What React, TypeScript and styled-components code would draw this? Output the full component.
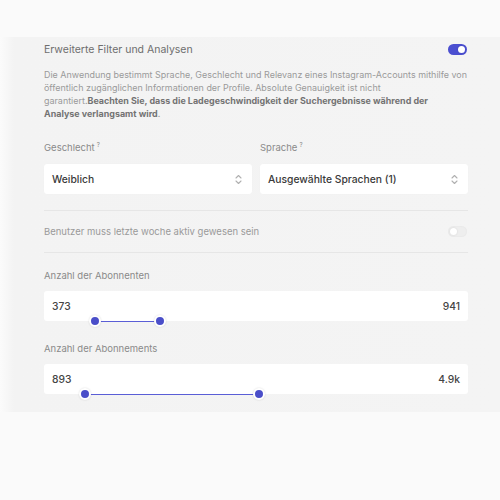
import React from 'react';
import styled, { createGlobalStyle } from 'styled-components';

const GlobalStyle = createGlobalStyle`
	html, body {
		margin: 0;
		padding: 0;
		background: #fafafa;
		font-family: Inter, 'Noto Sans', sans-serif;
	}
`;

const Page = styled.div`
	width: 500px;
	height: 500px;
	display: flex;
	flex-direction: column;
	background: #fafafa;
`;

const Spacer = styled.div<{ $h: number }>`
	height: ${({ $h }) => $h}px;
	flex-shrink: 0;
`;

const Panel = styled.div`
	display: flex;
	background: linear-gradient(to right, #fbfbfb 0px, #f3f3f3 14px, #f4f4f4 100%);
	height: 375px;
	box-sizing: border-box;
	padding: 5px 32px 0 44px;
`;

const Content = styled.div`
	width: 424px;
	display: flex;
	flex-direction: column;
`;

const HeaderRow = styled.div`
	display: flex;
	align-items: center;
	justify-content: space-between;
	height: 14px;
`;

const Title = styled.div`
	font-size: 10.5px;
	color: #6e6e6e;
`;

const Toggle = styled.div<{ $on?: boolean }>`
	width: 19px;
	height: 11px;
	border-radius: 6px;
	background: ${({ $on }) => ($on ? '#4b4fd0' : '#eeeeee')};
	position: relative;
	margin-right: 1px;
	box-shadow: ${({ $on }) => ($on ? 'none' : 'inset 0 0 2px rgba(0,0,0,0.06)')};

	&::after {
		content: '';
		position: absolute;
		top: 2px;
		left: ${({ $on }) => ($on ? '10px' : '2px')};
		width: 7px;
		height: 7px;
		border-radius: 50%;
		background: #fff;
		box-shadow: 0 0 2px rgba(0, 0, 0, 0.12);
	}
`;

const Description = styled.p`
	margin: 12px 0 0;
	font-size: 8.95px;
	line-height: 13px;
	color: #9a9a9a;
	white-space: nowrap;

	b {
		font-weight: 700;
		color: #737373;
	}
`;

const FieldGrid = styled.div`
	display: grid;
	grid-template-columns: 1fr 1fr;
	gap: 8px;
	margin-top: 22px;
`;

const Field = styled.div`
	display: flex;
	flex-direction: column;
`;

const Label = styled.div`
	font-size: 9.5px;
	color: #8a8a8a;
	height: 12px;
	display: flex;
	align-items: flex-start;

	sup {
		font-size: 6px;
		margin-left: 2px;
		line-height: 1;
	}
`;

const SelectBox = styled.div`
	margin-top: 10px;
	height: 30px;
	background: #fff;
	border-radius: 3px;
	display: flex;
	align-items: center;
	justify-content: space-between;
	padding: 0 10px 0 8px;
	font-size: 10.3px;
	font-weight: 500;
	color: #3a3a3a;
	box-shadow: 0 0 1px rgba(0, 0, 0, 0.04);
`;

const Divider = styled.div<{ $top: number }>`
	height: 1px;
	background: #e6e6e6;
	margin-top: ${({ $top }) => $top}px;
`;

const OptionRow = styled.div`
	display: flex;
	align-items: center;
	justify-content: space-between;
	height: 41px;
	font-size: 9.5px;
	color: #9a9a9a;
`;

const RangeField = styled.div<{ $top: number }>`
	margin-top: ${({ $top }) => $top}px;
	display: flex;
	flex-direction: column;
`;

const RangeBox = styled.div`
	margin-top: 9px;
	height: 30px;
	background: #fff;
	border-radius: 3px;
	display: flex;
	align-items: center;
	justify-content: space-between;
	padding: 0 8px;
	font-size: 10.3px;
	font-weight: 500;
	color: #444;
	position: relative;
`;

const Track = styled.div`
	position: absolute;
	height: 1.5px;
	background: #5a5ed6;
	bottom: -1px;
`;

const Thumb = styled.div`
	position: absolute;
	width: 8px;
	height: 8px;
	border-radius: 50%;
	background: #4a4ec9;
	border: 2px solid #fff;
	bottom: -6px;
	margin-left: -6px;
	box-shadow: 0 0 2px rgba(0, 0, 0, 0.15);
`;

const Chevrons = () => (
	<svg width="7" height="11" viewBox="0 0 7 11" fill="none" stroke="#b0b0b0" strokeWidth="1.1" strokeLinecap="round" strokeLinejoin="round">
		<path d="M1 4 L3.5 1.5 L6 4" />
		<path d="M1 7 L3.5 9.5 L6 7" />
	</svg>
);

interface RangeProps {
	label: string;
	min: string;
	max: string;
	from: number;
	to: number;
	top: number;
}

const Range = ({ label, min, max, from, to, top }: RangeProps) => (
	<RangeField $top={top}>
		<Label>{label}</Label>
		<RangeBox>
			<span>{min}</span>
			<span>{max}</span>
			<Track style={{ left: from, width: to - from }} />
			<Thumb style={{ left: from }} />
			<Thumb style={{ left: to }} />
		</RangeBox>
	</RangeField>
);

const App = () => {
	return (
		<Page>
			<GlobalStyle />
			<Spacer $h={37} />
			<Panel>
				<Content>
					<HeaderRow>
						<Title>Erweiterte Filter und Analysen</Title>
						<Toggle $on />
					</HeaderRow>
					<Description>
						Die Anwendung bestimmt Sprache, Geschlecht und Relevanz eines Instagram-Accounts mithilfe von
						<br />
						öffentlich zugänglichen Informationen der Profile. Absolute Genauigkeit ist nicht
						<br />
						garantiert.<b>Beachten Sie, dass die Ladegeschwindigkeit der Suchergebnisse während der</b>
						<br />
						<b>Analyse verlangsamt wird</b>.
					</Description>
					<FieldGrid>
						<Field>
							<Label>
								Geschlecht<sup>?</sup>
							</Label>
							<SelectBox>
								<span>Weiblich</span>
								<Chevrons />
							</SelectBox>
						</Field>
						<Field>
							<Label>
								Sprache<sup>?</sup>
							</Label>
							<SelectBox>
								<span>Ausgewählte Sprachen (1)</span>
								<Chevrons />
							</SelectBox>
						</Field>
					</FieldGrid>
					<Divider $top={16} />
					<OptionRow>
						<span>Benutzer muss letzte woche aktiv gewesen sein</span>
						<Toggle />
					</OptionRow>
					<Divider $top={0} />
					<Range label="Anzahl der Abonnenten" min="373" max="941" from={51} to={116} top={17} />
					<Range label="Anzahl der Abonnements" min="893" max="4.9k" from={41} to={215} top={22} />
				</Content>
			</Panel>
		</Page>
	);
};

export default App;
